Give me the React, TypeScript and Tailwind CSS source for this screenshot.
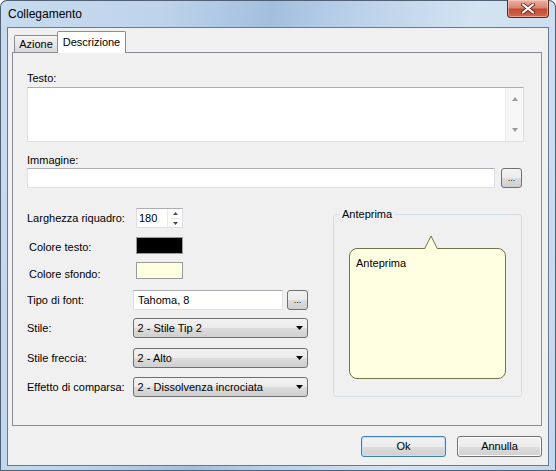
import React from 'react';

// pulsante stile Vista
const btnFace =
  'bg-[linear-gradient(180deg,#f2f2f2_0%,#ebebeb_50%,#dddddd_50%,#cfcfcf_100%)]';

function DownArrow() {
  return (
    <svg width="7" height="4" viewBox="0 0 7 4">
      <polygon points="0,0 7,0 3.5,4" fill="#000" />
    </svg>
  );
}

function DotsButton() {
  return (
    <div
      className={`flex items-end justify-center w-[21px] h-[20px] rounded-[3px] border border-[#707070] ${btnFace} pb-[4px]`}
    >
      <span className="text-[9px] leading-[9px] tracking-[0px]">...</span>
    </div>
  );
}

function Combo({ value }: { value: string }) {
  return (
    <div
      className={`flex items-center justify-between h-[20px] w-[176px] rounded-[3px] border border-[#707070] ${btnFace} pl-[4px] pr-[4px]`}
    >
      <span>{value}</span>
      <DownArrow />
    </div>
  );
}

const textBox = 'border border-[#dbdfe6] border-t-[#abadb3] bg-white';

export default function App() {
  return (
    <div className="w-[556px] h-[471px] overflow-hidden font-['Liberation_Sans',Arial,sans-serif] text-[11px] leading-[13px] text-black">
      <div className="relative w-[556px] h-[471px] rounded-t-[7px] shadow-[inset_0_0_0_1px_#506075] bg-[linear-gradient(100deg,#c8dbef_0%,#bed4eb_25%,#a3bfde_43%,#b9d0e9_55%,#d3e3f2_75%,#c4d8ed_100%)]">
        {/* barra del titolo */}
        <div className="flex items-start justify-between h-[27px]">
          <div className="pl-[8px] pt-[7px] text-[12px] leading-[14px]">Collegamento</div>
          <div className="mr-[7px] w-[42px] h-[18px] rounded-b-[4px] border border-t-0 border-[#5a2b24] bg-[linear-gradient(180deg,#eab1a3_0%,#d98670_45%,#c4492f_55%,#cf6b52_100%)] flex items-center justify-center shadow-[inset_0_0_0_1px_rgba(255,220,210,0.5)]">
            <svg width="14" height="11" viewBox="0 0 14 11">
              <path d="M2 1.5 L12 9.5 M12 1.5 L2 9.5" stroke="#6b2a1f" strokeWidth="4" strokeLinecap="round" />
              <path d="M2 1.5 L12 9.5 M12 1.5 L2 9.5" stroke="#fff" strokeWidth="2.2" strokeLinecap="round" />
            </svg>
          </div>
        </div>

        {/* area client */}
        <div className="ml-[7px] w-[542px] h-[439px] border border-[#687a90] bg-[#f0f0f0]">
          {/* schede */}
          <div className="flex items-end ml-[6px] pt-[4px] h-[24px]">
            <div className="flex items-center justify-center w-[44px] h-[17px] border border-b-0 border-[#898c95] bg-[linear-gradient(180deg,#f6f6f6_0%,#e6e6e6_50%,#dadada_100%)] rounded-t-[2px] pt-[1px]">
              Azione
            </div>
            <div className="relative z-10 -ml-[1px] -mb-[1px] flex items-center justify-center w-[69px] h-[22px] border border-b-0 border-[#898c95] bg-white rounded-t-[2px] pb-[1px]">
              Descrizione
            </div>
          </div>

          <div className="ml-[4px] w-[530px] h-[374px] border border-[#898c95] bg-[#f0f0f0] px-[14px]">
            <div className="mt-[19px]">Testo:</div>
            <div className={`mt-[2px] flex w-[497px] h-[55px] ${textBox}`}>
              <div className="flex-1" />
              <div className="w-[18px] flex flex-col items-center justify-between py-[9px] bg-[#f7f7f7] border-l border-[#ececec]">
                <svg width="6" height="4" viewBox="0 0 6 4">
                  <polygon points="0,4 6,4 3,0" fill="#9a9a9a" />
                </svg>
                <svg width="6" height="4" viewBox="0 0 6 4">
                  <polygon points="0,0 6,0 3,4" fill="#9a9a9a" />
                </svg>
              </div>
            </div>

            <div className="mt-[12px]">Immagine:</div>
            <div className="mt-[1px] flex items-center gap-[6px]">
              <div className={`w-[468px] h-[20px] ${textBox}`} />
              <DotsButton />
            </div>

            <div className="mt-[20px] flex">
              {/* colonna sinistra */}
              <div className="w-[281px]">
                <div className="flex items-center h-[20px]">
                  <div className="w-[109px] pt-[1px]">Larghezza riquadro:</div>
                  <div className={`flex w-[47px] h-[20px] ${textBox}`}>
                    <div className="flex-1 pl-[2px] pt-[3px]">180</div>
                    <div className="w-[15px] flex flex-col items-center justify-center gap-[3px] border-l border-[#eaeaea]">
                      <svg width="5" height="3" viewBox="0 0 5 3">
                        <polygon points="0,3 5,3 2.5,0" fill="#4a4a4a" />
                      </svg>
                      <div className="w-[9px] h-px bg-[#e2e2e2]" />
                      <svg width="5" height="3" viewBox="0 0 5 3">
                        <polygon points="0,0 5,0 2.5,3" fill="#4a4a4a" />
                      </svg>
                    </div>
                  </div>
                </div>

                <div className="mt-[9px] flex h-[17px]">
                  <div className="w-[109px] pl-[2px] pt-[4px]">Colore testo:</div>
                  <div className="w-[47px] h-[17px] border border-[#9b9b9b] bg-black" />
                </div>

                <div className="mt-[8px] flex h-[17px]">
                  <div className="w-[109px] pl-[2px] pt-[6px]">Colore sfondo:</div>
                  <div className="w-[47px] h-[17px] border border-[#9b9b9b] bg-[#ffffe1]" />
                </div>

                <div className="mt-[11px] flex items-center h-[20px]">
                  <div className="w-[106px]">Tipo di font:</div>
                  <div className={`w-[150px] h-[20px] ${textBox} pl-[4px] pt-[3px]`}>Tahoma, 8</div>
                  <div className="ml-[4px]">
                    <DotsButton />
                  </div>
                </div>

                <div className="mt-[8px] flex items-center h-[20px]">
                  <div className="w-[106px]">Stile:</div>
                  <Combo value="2 - Stile Tip 2" />
                </div>

                <div className="mt-[10px] flex items-center h-[20px]">
                  <div className="w-[106px]">Stile freccia:</div>
                  <Combo value="2 - Alto" />
                </div>

                <div className="mt-[9px] flex items-center h-[20px]">
                  <div className="w-[106px]">Effetto di comparsa:</div>
                  <Combo value="2 - Dissolvenza incrociata" />
                </div>
              </div>

              {/* anteprima */}
              <fieldset className="ml-[25px] w-[189px] border border-[#d5dfe5] rounded-[3px] pb-[15px]">
                <legend className="ml-[6px] px-[2px] leading-[13px]">Anteprima</legend>
                <div className="relative mx-[15px] mt-[27px] h-[131px] rounded-[8px] border border-[#75734a] bg-[#ffffe1] pl-[6px] pt-[8px]">
                  <svg
                    className="absolute left-[74px] -top-[14px]"
                    width="14"
                    height="16"
                    viewBox="0 0 14 16"
                  >
                    <polygon points="0.5,14 7,1 13.5,14 13.5,16 0.5,16" fill="#ffffe1" />
                    <path d="M0.5 14 L7 1 L13.5 14" fill="none" stroke="#75734a" strokeWidth="1" />
                  </svg>
                  Anteprima
                </div>
              </fieldset>
            </div>
          </div>

          {/* pulsanti */}
          <div className="mt-[10px] flex justify-end gap-[11px] w-[534px]">
            <div
              className={`flex items-center justify-center w-[85px] h-[21px] rounded-[3px] border border-[#3c7fb1] ${btnFace} shadow-[inset_0_0_0_1px_#bfe4f9]`}
            >
              Ok
            </div>
            <div
              className={`flex items-center justify-center w-[85px] h-[21px] rounded-[3px] border border-[#707070] ${btnFace} shadow-[inset_0_0_0_1px_#fbfbfb]`}
            >
              Annulla
            </div>
          </div>
        </div>
      </div>
    </div>
  );
}
